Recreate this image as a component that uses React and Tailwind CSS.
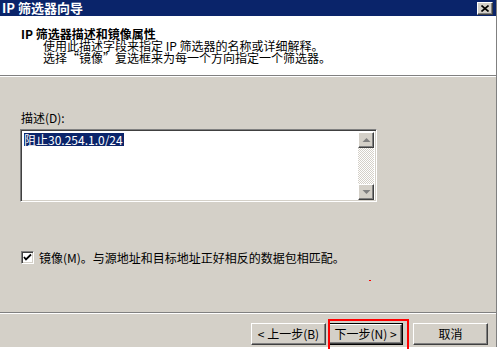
const raised =
  "bg-[#d4d0c8] border border-t-white border-l-white border-r-[#404040] border-b-[#404040] shadow-[inset_-1px_-1px_0_#808080]";

const WizardButton = ({ children, isDefault }) => (
  <div
    className={`h-[22px] w-[75px] flex items-center justify-center text-[12px] leading-3 text-black ${
      isDefault ? "border border-black" : ""
    }`}
  >
    <div className={`w-full h-full flex items-center justify-center ${raised}`}>
      {children}
    </div>
  </div>
);

const ScrollArrow = ({ up }) => (
  <div className={`w-[16px] h-[16px] flex items-center justify-center ${raised}`}>
    <svg width="9" height="6" viewBox="0 0 9 6">
      {up ? (
        <polygon points="0.5,5 4.5,1 8.5,5" fill="#808080" />
      ) : (
        <polygon points="0.5,1 4.5,5 8.5,1" fill="#808080" />
      )}
    </svg>
  </div>
);

export default function App() {
  return (
    <div className="w-[500px] h-[349px] bg-white relative overflow-hidden font-['Noto_Sans_CJK_SC',sans-serif] text-[12px] leading-3 text-black">
      <div className="w-[497px] h-[347px] border-r border-[#808080] bg-[#d4d0c8] flex flex-col">
        {/* title bar */}
        <div className="h-[16px] bg-[#0a246a] flex items-center justify-between pl-[2px] pr-[3px] shrink-0">
          <span className="text-white font-bold text-[13px] leading-4">IP 筛选器向导</span>
          <div className={`w-[16px] h-[13px] flex items-center justify-center ${raised}`}>
            <svg width="8" height="7" viewBox="0 0 8 7">
              <path d="M0.5 0.5 L7.5 6.5 M7.5 0.5 L0.5 6.5" stroke="#000" strokeWidth="1.6" />
            </svg>
          </div>
        </div>

        {/* header */}
        <div className="h-[59px] bg-white pt-[11px] pl-[21px] shrink-0">
          <div className="font-bold leading-[13px]">IP 筛选器描述和镜像属性</div>
          <div className="pl-[22px]">
            <p className="leading-[12px]">使用此描述字段来指定 IP 筛选器的名称或详细解释。</p>
            <p className="leading-[12px]">选择“镜像”复选框来为每一个方向指定一个筛选器。</p>
          </div>
        </div>
        <div className="h-[2px] border-t border-[#808080] border-b border-b-white shrink-0" />

        {/* body */}
        <div className="flex-1 flex flex-col pl-[20px]">
          <div className="mt-[35px] pl-[1px]">描述(D):</div>
          <div className="mt-[5px] w-[357px] h-[73px] bg-white flex border border-t-[#808080] border-l-[#808080] border-r-white border-b-white shadow-[inset_1px_1px_0_#404040,inset_-1px_-1px_0_#d4d0c8] p-[2px] pb-[1px]">
            <div className="flex-1 pl-[1px] pt-[1px]">
              <span className="bg-[#0a246a] text-white inline-block leading-[13px] pr-[1px]">阻止30.254.1.0/24</span>
            </div>
            <div className="w-[16px] flex flex-col bg-[repeating-conic-gradient(#ffffff_0_25%,#d4d0c8_0_50%)] bg-[length:2px_2px]">
              <ScrollArrow up />
              <div className="flex-1" />
              <ScrollArrow />
            </div>
          </div>

          <div className="mt-[49px] flex items-center gap-[5px] pl-[1px]">
            <div className="w-[13px] h-[13px] bg-white border border-t-[#808080] border-l-[#808080] border-r-white border-b-white shadow-[inset_1px_1px_0_#404040,inset_-1px_-1px_0_#d4d0c8] flex items-center justify-center">
              <svg width="9" height="9" viewBox="0 0 9 9">
                <polyline points="1,4 3,6.5 8,1.5" fill="none" stroke="#000" strokeWidth="1.8" />
              </svg>
            </div>
            <span>镜像(M)。与源地址和目标地址正好相反的数据包相匹配。</span>
          </div>

          <div className="mt-[48px] -ml-[20px] h-[2px] border-t border-[#808080] border-b border-b-white" />

          <div className="mt-[9px] flex pl-[231px] gap-[2px]">
            <WizardButton>&lt; 上一步(B)</WizardButton>
            <WizardButton isDefault>下一步(N) &gt;</WizardButton>
            <div className="ml-[8px]">
              <WizardButton>取消</WizardButton>
            </div>
          </div>
        </div>
      </div>

      {/* annotations */}
      <div className="absolute left-[328px] top-[319px] w-[81px] h-[40px] border-2 border-[#ff0000]" />
      <div className="absolute left-[369px] top-[280px] w-[2px] h-[1px] bg-[#ff0000]" />
    </div>
  );
}
